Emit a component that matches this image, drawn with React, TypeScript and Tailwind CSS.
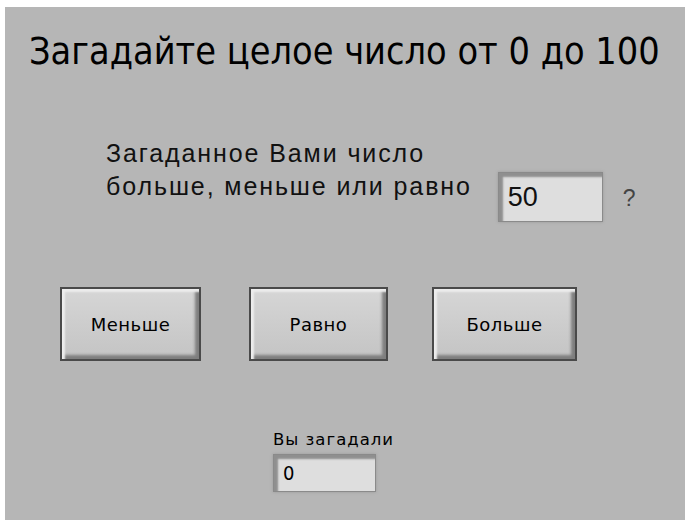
export default function App() {
  const bevel =
    "border-2 border-[#4a4a4a] bg-gradient-to-b from-[#d6d6d6] to-[#c4c4c4] shadow-[inset_3px_3px_2px_#ededed,inset_-4px_-4px_3px_#7e7e7e]";
  const well =
    "bg-[#dedede] border border-[#8a8a8a] shadow-[inset_4px_4px_2px_#8f8f8f,0_0_3px_#9a9a9a]";

  return (
    <div className="w-[685px] h-[520px] bg-white pl-[5px] pt-[7px]">
      <div className="h-full bg-[#b6b6b6] text-black font-['DejaVu_Sans',sans-serif] flex flex-col">
        {/* heading */}
        <h1 className="pl-[24px] pt-[21px] font-['DejaVu_Sans_Condensed','DejaVu_Sans',sans-serif] text-[37.5px] leading-[46px] whitespace-nowrap">
          Загадайте целое число от 0 до 100
        </h1>

        {/* question with current guess */}
        <div className="mt-[63px] pl-[101px] flex items-end font-['Liberation_Sans',sans-serif] text-[25px] tracking-[1.9px] text-[#111]">
          <div className="leading-[33px]">
            <div>Загаданное Вами число</div>
            <div>больше, меньше или равно</div>
          </div>
          <div className={`ml-[26px] mb-[-19px] w-[105px] h-[50px] flex items-center pl-[9px] text-[27px] tracking-normal ${well}`}>
            50
          </div>
          <div className="ml-[20px] mb-[-12px] leading-[33px] text-[#444] text-[23px]">?</div>
        </div>

        {/* answer buttons */}
        <div className="mt-[84px] pl-[55px] flex text-[18px] tracking-[0.5px]">
          <button className={`w-[141px] h-[74px] ${bevel}`}>Меньше</button>
          <button className={`ml-[48px] w-[139px] h-[74px] ${bevel}`}>Равно</button>
          <button className={`ml-[44px] w-[145px] h-[74px] ${bevel}`}>Больше</button>
        </div>

        {/* last guessed number */}
        <div className="mt-[69px] pl-[268px] flex flex-col items-start">
          <div className="leading-[20px] text-[16.5px] tracking-[1px]">Вы загадали</div>
          <div className={`mt-[4px] w-[103px] h-[38px] flex items-center pl-[9px] text-[20px] font-['DejaVu_Sans_Condensed','DejaVu_Sans',sans-serif] ${well}`}>
            0
          </div>
        </div>
      </div>
    </div>
  );
}
